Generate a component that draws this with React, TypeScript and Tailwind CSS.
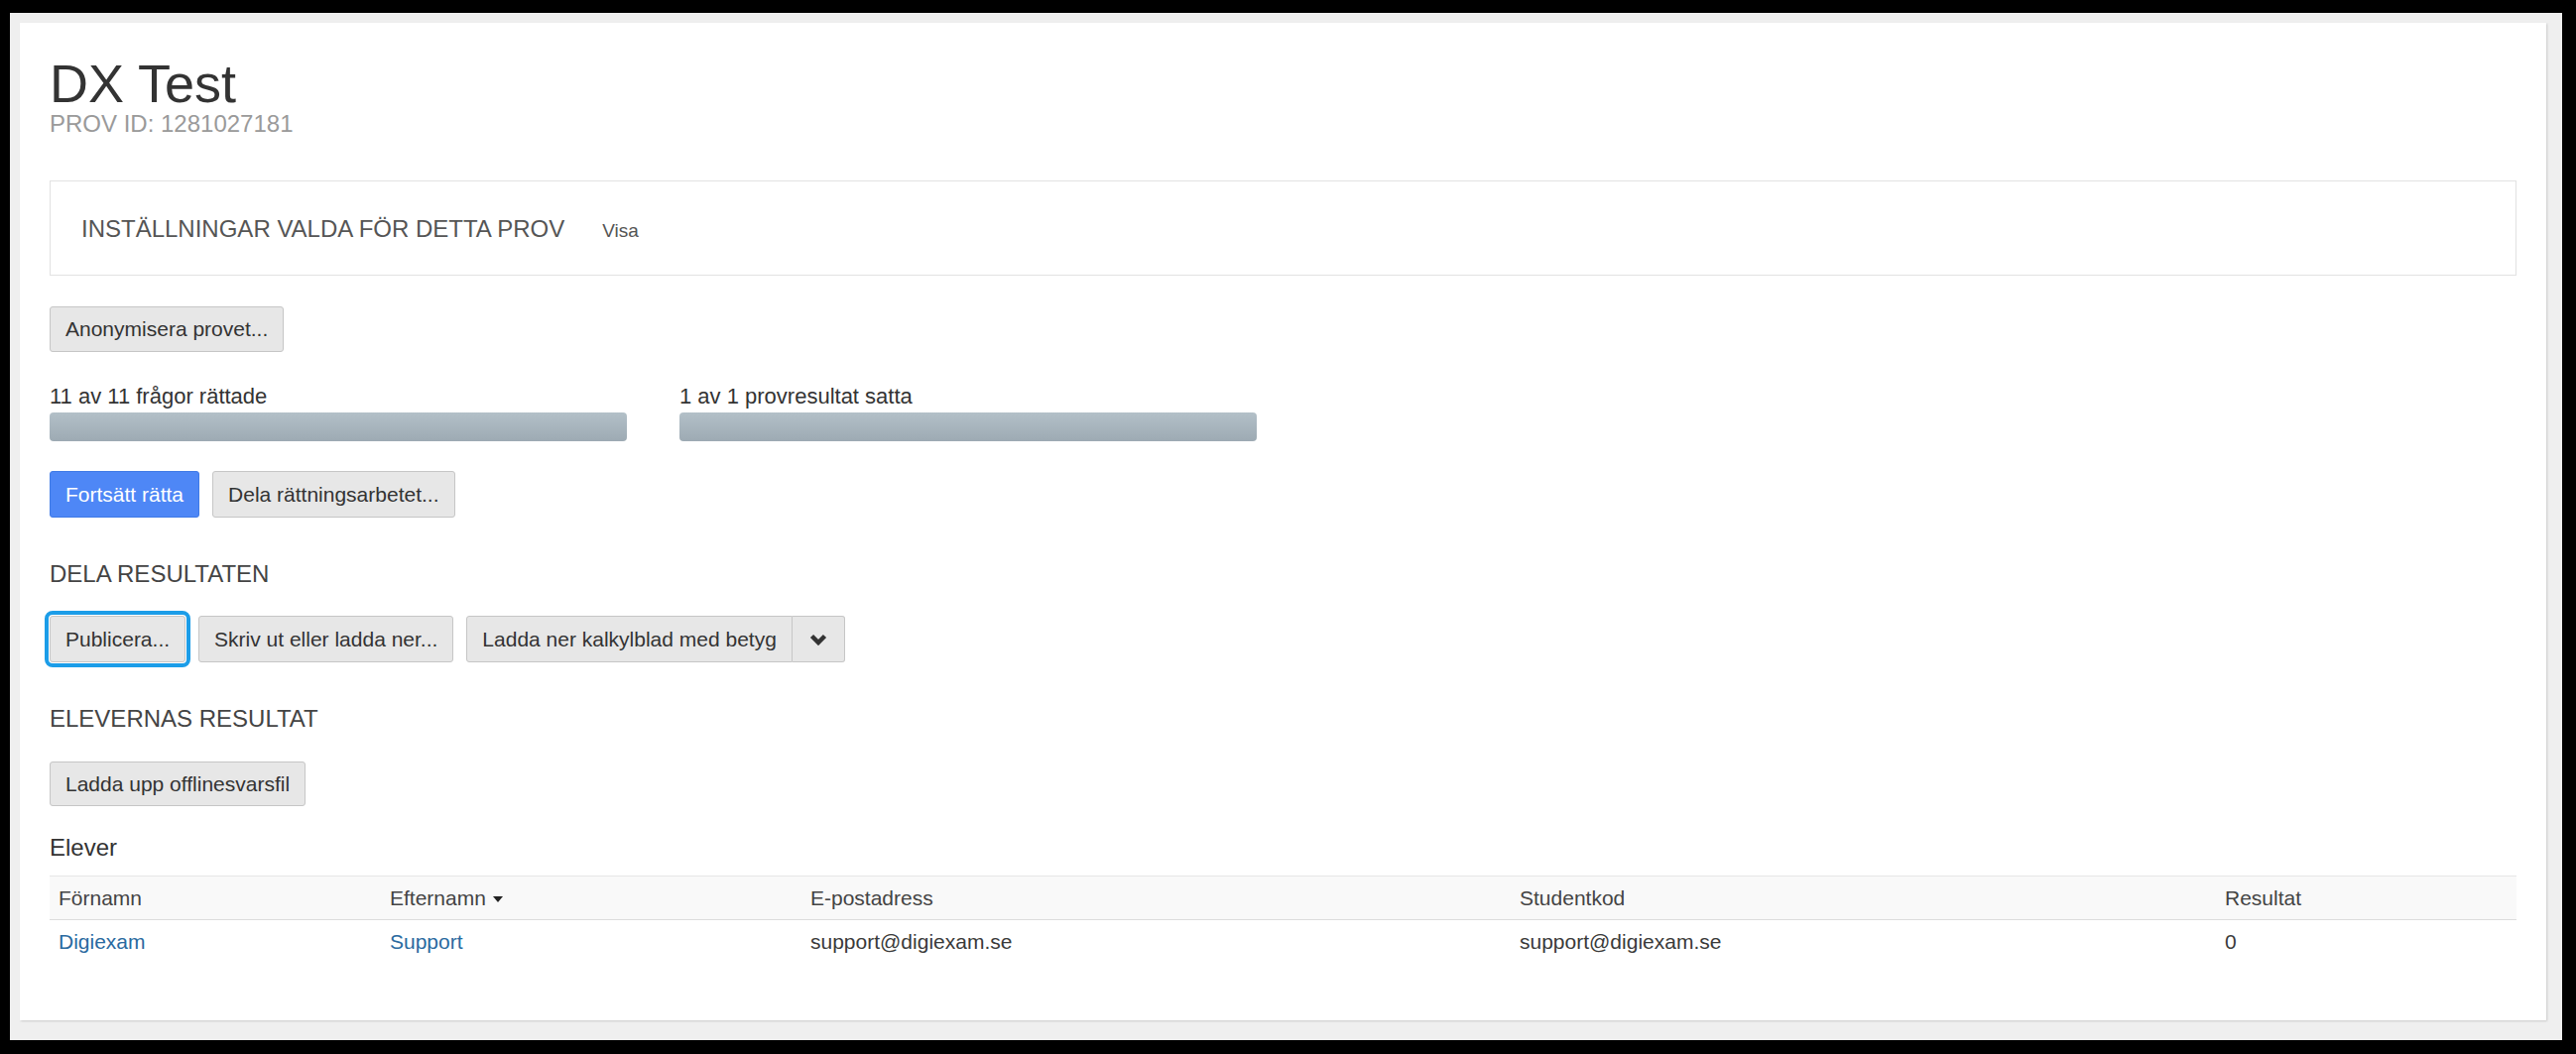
const btn =
  'flex items-center rounded-[3px] border border-[#c6c6c6] bg-[#e7e7e7] px-[15px] text-[21px] text-[#333]'

function ProgressColumn({ label }: { label: string }) {
  return (
    <div className="flex w-[582px] flex-col">
      <div className="text-[22px] leading-[26px] text-[#333]">{label}</div>
      <div className="mt-[3px] h-[29px] rounded-[4px] bg-linear-to-b from-[#b3c0c8] to-[#9daab3]" />
    </div>
  )
}

export default function App() {
  return (
    <div
      className="h-screen bg-black pt-[13px] pl-[10px] pr-[14px] pb-[14px]"
      style={{ fontFamily: '"Liberation Sans", Arial, sans-serif' }}
    >
      <div className="flex h-[1036px] flex-col bg-[#efefef] pt-[10px] pl-[10px] pr-[16px] pb-[20px]">
        <div className="flex flex-1 flex-col bg-white px-[30px] pt-[33px] shadow-[1px_1px_2px_rgba(0,0,0,0.15)]">
          <h1 className="text-[54px] leading-[56px] text-[#333]">DX Test</h1>
          <div className="text-[24px] leading-[26px] text-[#9a9a9a]">PROV ID: 1281027181</div>

          <div className="mt-[44px] flex h-[96px] items-baseline border border-[#e2e2e2] pl-[31px] pt-[35px]">
            <span className="text-[24px] leading-[26px] text-[#555]">INSTÄLLNINGAR VALDA FÖR DETTA PROV</span>
            <span className="ml-[38px] text-[19px] text-[#555]">Visa</span>
          </div>

          <div className="mt-[31px] flex">
            <button className={`${btn} h-[46px]`}>Anonymisera provet...</button>
          </div>

          <div className="mt-[32px] flex gap-[53px]">
            <ProgressColumn label="11 av 11 frågor rättade" />
            <ProgressColumn label="1 av 1 provresultat satta" />
          </div>

          <div className="mt-[30px] flex gap-[13px]">
            <button className="flex h-[47px] items-center rounded-[3px] border border-[#3f7ae6] bg-[#4e87f6] px-[15px] text-[21px] text-white">
              Fortsätt rätta
            </button>
            <button className={`${btn} h-[47px]`}>Dela rättningsarbetet...</button>
          </div>

          <h2 className="mt-[44px] text-[24px] leading-[26px] text-[#444]">DELA RESULTATEN</h2>

          <div className="mt-[29px] flex gap-[13px]">
            <button className={`${btn} h-[47px] outline-4 outline-offset-1 outline-[#1c9de8]`}>Publicera...</button>
            <button className={`${btn} h-[47px]`}>Skriv ut eller ladda ner...</button>
            <div className="flex">
              <button className={`${btn} h-[47px] rounded-r-none`}>Ladda ner kalkylblad med betyg</button>
              <button className={`${btn} h-[47px] w-[53px] justify-center rounded-l-none border-l-0`}>
                <svg width="18" height="12" viewBox="0 0 18 12">
                  <path d="M2.5 2.5 L9 9 L15.5 2.5" fill="none" stroke="#333" strokeWidth="4.5" strokeLinejoin="miter" />
                </svg>
              </button>
            </div>
          </div>

          <h2 className="mt-[44px] text-[24px] leading-[26px] text-[#444]">ELEVERNAS RESULTAT</h2>

          <div className="mt-[30px] flex">
            <button className={`${btn} h-[45px]`}>Ladda upp offlinesvarsfil</button>
          </div>

          <h3 className="mt-[29px] text-[24px] leading-[26px] text-[#333]">Elever</h3>

          <table className="mt-[15px] w-full table-fixed text-left text-[21px]">
            <thead>
              <tr className="h-[44px] border-y border-t-[#e6e6e6] border-b-[#dddddd] bg-[#f9f9f9] text-[#444]">
                <th className="w-[334px] pl-[9px] font-normal">Förnamn</th>
                <th className="w-[424px] pl-[9px] font-normal">
                  <span className="inline-flex items-center">
                    Efternamn
                    <span className="ml-[7px] mt-[2px] inline-block border-x-[5px] border-t-[6px] border-x-transparent border-t-[#222]" />
                  </span>
                </th>
                <th className="w-[715px] pl-[9px] font-normal">E-postadress</th>
                <th className="w-[711px] pl-[9px] font-normal">Studentkod</th>
                <th className="pl-[9px] font-normal">Resultat</th>
              </tr>
            </thead>
            <tbody>
              <tr className="h-[43px] text-[#3a3a3a]">
                <td className="pl-[9px] text-[#2a6aa0]">Digiexam</td>
                <td className="pl-[9px] text-[#2a6aa0]">Support</td>
                <td className="pl-[9px]">support@digiexam.se</td>
                <td className="pl-[9px]">support@digiexam.se</td>
                <td className="pl-[9px]">0</td>
              </tr>
            </tbody>
          </table>
        </div>
      </div>
    </div>
  )
}
